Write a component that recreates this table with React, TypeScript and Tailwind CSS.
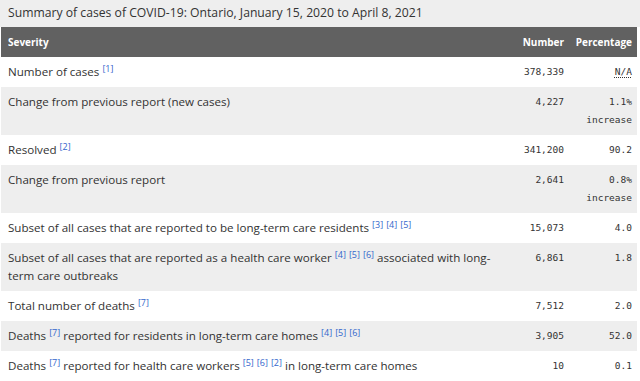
import React from "react";

type Row = {
  label: React.ReactNode;
  num: string;
  pct: string;
  pctNote?: string;
  abbr?: boolean;
};

const Ref = ({ n }: { n: number }) => (
  <sup className="text-[9px] text-[#3366cc] top-[-4px]">[{n}]</sup>
);

const Refs = ({ ns }: { ns: number[] }) => (
  <>
    {ns.map((n, i) => (
      <React.Fragment key={i}>
        {" "}
        <Ref n={n} />
      </React.Fragment>
    ))}
  </>
);

const rows: Row[] = [
  { label: <>Number of cases<Refs ns={[1]} /></>, num: "378,339", pct: "N/A", abbr: true },
  { label: "Change from previous report (new cases)", num: "4,227", pct: "1.1%", pctNote: "increase" },
  { label: <>Resolved<Refs ns={[2]} /></>, num: "341,200", pct: "90.2" },
  { label: "Change from previous report", num: "2,641", pct: "0.8%", pctNote: "increase" },
  {
    label: <>Subset of all cases that are reported to be long-term care residents<Refs ns={[3, 4, 5]} /></>,
    num: "15,073",
    pct: "4.0",
  },
  {
    label: (
      <>
        Subset of all cases that are reported as a health care worker<Refs ns={[4, 5, 6]} /> associated with long-term care outbreaks
      </>
    ),
    num: "6,861",
    pct: "1.8",
  },
  { label: <>Total number of deaths<Refs ns={[7]} /></>, num: "7,512", pct: "2.0" },
  {
    label: <>Deaths<Refs ns={[7]} /> reported for residents in long-term care homes<Refs ns={[4, 5, 6]} /></>,
    num: "3,905",
    pct: "52.0",
  },
  {
    label: <>Deaths<Refs ns={[7]} /> reported for health care workers<Refs ns={[5, 6, 2]} /> in long-term care homes</>,
    num: "10",
    pct: "0.1",
  },
];

export default function App() {
  const mono = "font-['DejaVu_Sans_Mono',monospace] text-[9.5px] text-[#333]";
  return (
    <div className="w-[640px] h-[381px] overflow-hidden bg-white font-['Open_Sans',sans-serif] text-[#333]">
      <div className="h-[27px] bg-[#eeeeee] px-2 flex items-center text-[12.2px]">
        Summary of cases of COVID-19: Ontario, January 15, 2020 to April 8, 2021
      </div>
      <table className="ml-px w-[636px] table-fixed border-collapse">
        <colgroup>
          <col className="w-[500px]" />
          <col className="w-[68px]" />
          <col className="w-[68px]" />
        </colgroup>
        <thead>
          <tr className="h-[30px] bg-[#616161] text-white text-[10px] font-semibold">
            <th className="text-left pl-[7px]">Severity</th>
            <th className="text-right pr-[5px]">Number</th>
            <th className="text-right pr-[5px]">Percentage</th>
          </tr>
        </thead>
        <tbody>
          {rows.map((r, i) => (
            <tr key={i} className={i % 2 === 1 ? "bg-[#eeeeee]" : "bg-white"}>
              <td className="pl-[7px] pr-[5px] py-[6px] align-top text-[11.6px] leading-[18px]">{r.label}</td>
              <td className={`pr-[5px] py-[6px] align-top text-right leading-[18px] ${mono}`}>{r.num}</td>
              <td className={`pr-[5px] py-[6px] align-top text-right leading-[18px] ${mono}`}>
                {r.abbr ? (
                  <span className="underline decoration-dotted underline-offset-2">{r.pct}</span>
                ) : (
                  r.pct
                )}
                {r.pctNote && (
                  <>
                    <br />
                    {r.pctNote}
                  </>
                )}
              </td>
            </tr>
          ))}
        </tbody>
      </table>
    </div>
  );
}
